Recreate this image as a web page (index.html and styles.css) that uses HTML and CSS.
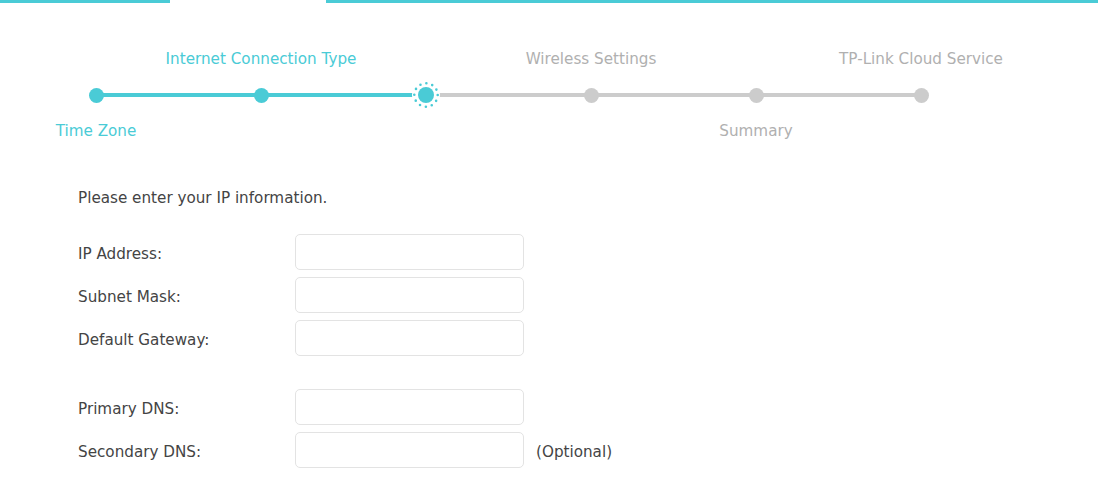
FILE: index.html
```html
<!DOCTYPE html>
<html>
<head>
<meta charset="utf-8">
<link rel="stylesheet" href="styles.css">
</head>
<body>
<div class="topbar"><span class="seg seg-a"></span><span class="seg-gap"></span><span class="seg seg-b"></span></div>

<div class="stepper">
  <div class="step done first">
    <div class="lbl top"></div>
    <div class="node"><span class="dot"></span></div>
    <div class="lbl bottom">Time Zone</div>
  </div>
  <div class="step done">
    <div class="lbl top">Internet Connection Type</div>
    <div class="node"><span class="dot"></span></div>
    <div class="lbl bottom"></div>
  </div>
  <div class="step current">
    <div class="lbl top"></div>
    <div class="node">
      <svg class="ring" width="28" height="28" viewBox="0 0 28 28">
        <circle cx="14" cy="14" r="11.7" fill="none" stroke="#4acbd6" stroke-width="2.6" stroke-linecap="round" stroke-dasharray="0 6.13"/>
        <circle cx="14" cy="14" r="8" fill="#4acbd6"/>
      </svg>
    </div>
    <div class="lbl bottom"></div>
  </div>
  <div class="step">
    <div class="lbl top">Wireless Settings</div>
    <div class="node"><span class="dot"></span></div>
    <div class="lbl bottom"></div>
  </div>
  <div class="step">
    <div class="lbl top"></div>
    <div class="node"><span class="dot"></span></div>
    <div class="lbl bottom">Summary</div>
  </div>
  <div class="step last">
    <div class="lbl top">TP-Link Cloud Service</div>
    <div class="node"><span class="dot"></span></div>
    <div class="lbl bottom"></div>
  </div>
</div>

<div class="form">
  <p class="intro">Please enter your IP information.</p>
  <div class="row"><label class="flabel">IP Address:</label><input class="field" type="text"></div>
  <div class="row"><label class="flabel">Subnet Mask:</label><input class="field" type="text"></div>
  <div class="row"><label class="flabel">Default Gateway:</label><input class="field" type="text"></div>
  <div class="row spaced"><label class="flabel">Primary DNS:</label><input class="field" type="text"></div>
  <div class="row"><label class="flabel">Secondary DNS:</label><input class="field" type="text"><span class="hint">(Optional)</span></div>
</div>
</body>
</html>
```
FILE: styles.css
```css
html, body {
  margin: 0;
  padding: 0;
  background: #fff;
}
body {
  font-family: "DejaVu Sans", Verdana, sans-serif;
  font-size: 15.2px;
  color: #444444;
  width: 1098px;
  height: 497px;
  overflow: hidden;
}
.topbar {
  display: flex;
  height: 3px;
}
.seg {
  background: #4acbd6;
  height: 3px;
}
.seg-a { width: 170px; }
.seg-gap { width: 156px; }
.seg-b { flex: 1; }

.stepper {
  display: grid;
  grid-template-columns: repeat(6, 165px);
  margin: 45px 0 0 13.5px;
}
.step {
  display: flex;
  flex-direction: column;
  align-items: center;
}
.lbl {
  height: 20px;
  line-height: 22px;
  white-space: nowrap;
  color: #b0b0b0;
}
.step.done .lbl { color: #4acbd6; }
.lbl.bottom { margin-top: 10px; }
.node {
  position: relative;
  margin-top: 12px;
  width: 100%;
  height: 30px;
  display: flex;
  align-items: center;
  justify-content: center;
}
.node::before, .node::after {
  content: "";
  position: absolute;
  top: 13px;
  height: 4px;
  width: 50%;
  background: #cccccc;
}
.node::before { left: 0; }
.node::after { right: 0; }
.step.done .node::before, .step.done .node::after,
.step.current .node::before { background: #4acbd6; }
.step.first .node::before, .step.last .node::after { display: none; }
.dot {
  position: relative;
  z-index: 1;
  width: 15px;
  height: 15px;
  border-radius: 50%;
  background: #cccccc;
}
.step.done .dot { background: #4acbd6; }
.ring {
  position: relative;
  z-index: 1;
  background: #fff;
  border-radius: 50%;
  display: block;
}

.form {
  padding-left: 78px;
  margin-top: 47px;
}
.intro {
  margin: 0 0 27px 0;
  height: 20px;
  line-height: 22px;
}
.row {
  display: flex;
  align-items: center;
  height: 36px;
  margin-bottom: 7px;
}
.row.spaced { margin-top: 33px; }
.flabel {
  width: 217px;
  line-height: 20px;
  padding-top: 4px;
}
.field {
  box-sizing: border-box;
  width: 229px;
  height: 36px;
  border: 1px solid #e3e3e3;
  border-radius: 5px;
  margin: 0;
  padding: 0 8px;
  font: inherit;
  outline: none;
}
.hint {
  margin-left: 12px;
  line-height: 20px;
  padding-top: 4px;
}
```
